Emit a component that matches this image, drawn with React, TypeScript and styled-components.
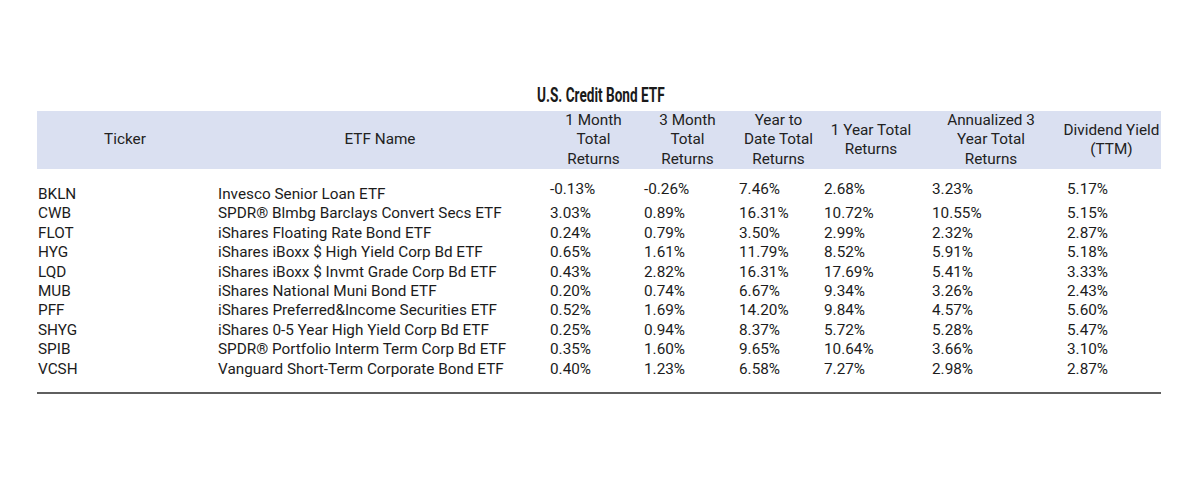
import styled, { createGlobalStyle } from "styled-components";

const GlobalStyle = createGlobalStyle`
  html, body {
    margin: 0;
    padding: 0;
    background: #ffffff;
  }
  body {
    font-family: Roboto, "Liberation Sans", sans-serif;
    color: #1c1c1c;
  }
`;

const COLS = "176px 334px 93px 95px 87px 98px 142px 99px";

const Page = styled.div`
  width: 1200px;
  height: 485px;
  box-sizing: border-box;
  padding: 84px 39px 0 37px;
`;

const TitleRow = styled.div`
  display: flex;
  justify-content: center;
  height: 22px;
  margin-bottom: 5px;
  padding-left: 4px;
`;

const Title = styled.h2`
  margin: 0;
  display: inline-block;
  font-family: Roboto, "Liberation Sans", sans-serif;
  font-weight: 700;
  font-size: 20px;
  line-height: 22px;
  color: #1a1a1a;
  transform: scaleX(0.68);
  white-space: nowrap;
`;

const HeaderBand = styled.div`
  display: grid;
  grid-template-columns: ${COLS};
  height: 58px;
  background: #dae0f1;
  align-items: center;
`;

const HeadCell = styled.div`
  text-align: center;
  font-size: 15.3px;
  line-height: 19.4px;
  color: #222;
  white-space: nowrap;
`;

const Body = styled.div`
  padding-top: 6px;
  border-bottom: 2px solid #5f5f5f;
  padding-bottom: 13px;
`;

const Row = styled.div<{ $lead?: boolean }>`
  display: grid;
  grid-template-columns: ${COLS};
  height: ${(p) => (p.$lead ? "29.4px" : "19.4px")};
  align-items: ${(p) => (p.$lead ? "end" : "center")};
`;

const Cell = styled.div<{ $pad: number; $lift?: boolean }>`
  padding-left: ${(p) => p.$pad}px;
  font-size: 15.3px;
  line-height: 19.4px;
  white-space: nowrap;
  align-self: ${(p) => (p.$lift ? "center" : "auto")};
  color: #1c1c1c;
`;

const headers: string[][] = [
  ["Ticker"],
  ["ETF Name"],
  ["1 Month", "Total", "Returns"],
  ["3 Month", "Total", "Returns"],
  ["Year to", "Date Total", "Returns"],
  ["1 Year Total", "Returns"],
  ["Annualized 3", "Year Total", "Returns"],
  ["Dividend Yield", "(TTM)"],
];

const pads = [1, 5, 3, 4, 4, 2, 12, 5];

const rows: string[][] = [
  ["BKLN", "Invesco Senior Loan ETF", "-0.13%", "-0.26%", "7.46%", "2.68%", "3.23%", "5.17%"],
  ["CWB", "SPDR® Blmbg Barclays Convert Secs ETF", "3.03%", "0.89%", "16.31%", "10.72%", "10.55%", "5.15%"],
  ["FLOT", "iShares Floating Rate Bond ETF", "0.24%", "0.79%", "3.50%", "2.99%", "2.32%", "2.87%"],
  ["HYG", "iShares iBoxx $ High Yield Corp Bd ETF", "0.65%", "1.61%", "11.79%", "8.52%", "5.91%", "5.18%"],
  ["LQD", "iShares iBoxx $ Invmt Grade Corp Bd ETF", "0.43%", "2.82%", "16.31%", "17.69%", "5.41%", "3.33%"],
  ["MUB", "iShares National Muni Bond ETF", "0.20%", "0.74%", "6.67%", "9.34%", "3.26%", "2.43%"],
  ["PFF", "iShares Preferred&Income Securities ETF", "0.52%", "1.69%", "14.20%", "9.84%", "4.57%", "5.60%"],
  ["SHYG", "iShares 0-5 Year High Yield Corp Bd ETF", "0.25%", "0.94%", "8.37%", "5.72%", "5.28%", "5.47%"],
  ["SPIB", "SPDR® Portfolio Interm Term Corp Bd ETF", "0.35%", "1.60%", "9.65%", "10.64%", "3.66%", "3.10%"],
  ["VCSH", "Vanguard Short-Term Corporate Bond ETF", "0.40%", "1.23%", "6.58%", "7.27%", "2.98%", "2.87%"],
];

export default function App() {
  return (
    <>
      <GlobalStyle />
      <Page>
        <TitleRow>
          <Title>U.S. Credit Bond ETF</Title>
        </TitleRow>
        <HeaderBand>
          {headers.map((lines, i) => (
            <HeadCell key={i}>
              {lines.map((l, j) => (
                <div key={j}>{l}</div>
              ))}
            </HeadCell>
          ))}
        </HeaderBand>
        <Body>
          {rows.map((r, i) => (
            <Row key={r[0]} $lead={i === 0}>
              {r.map((v, j) => (
                <Cell key={j} $pad={pads[j]} $lift={i === 0 && j > 1}>
                  {v}
                </Cell>
              ))}
            </Row>
          ))}
        </Body>
      </Page>
    </>
  );
}
